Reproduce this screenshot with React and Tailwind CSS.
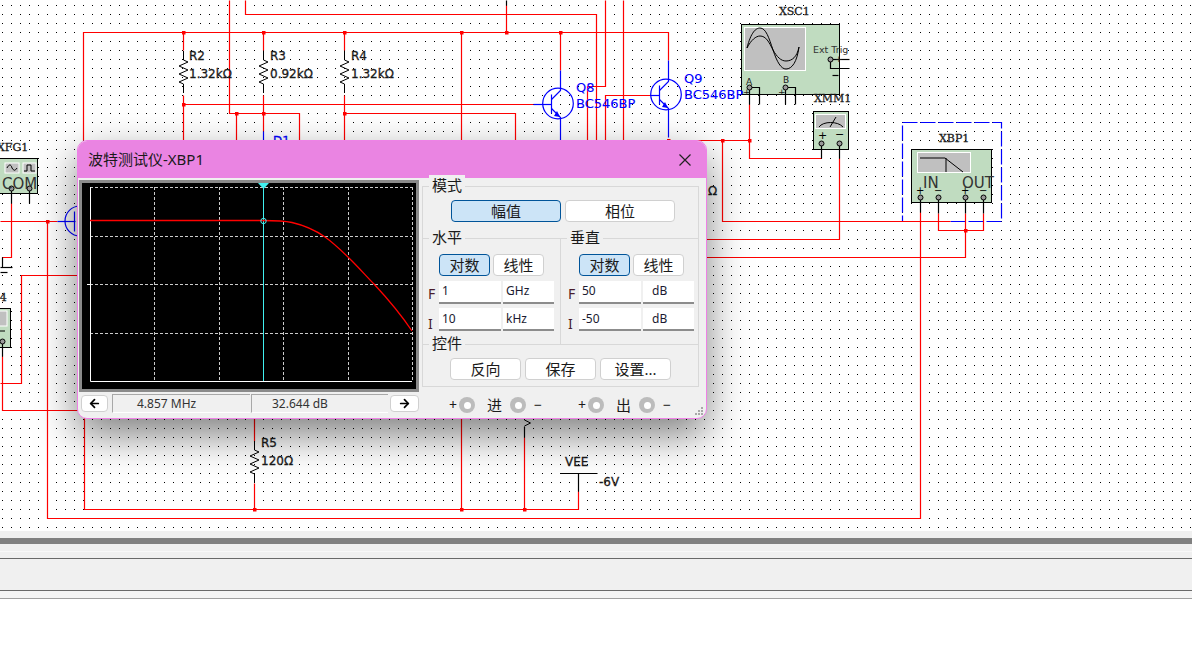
import React from "react";
import { ArrowLeft, ArrowRight } from "lucide-react";

const RED = [
  "83,140 83,32 668,32 668,60",
  "229,0 229,113 299,113 299,140",
  "245,0 245,14 596,14 596,140",
  "506,5 506,32",
  "183,32 183,50", "183,95 183,140",
  "263,32 263,50", "263,95 263,131",
  "344,32 344,50", "344,95 344,140",
  "183,104 533,104",
  "344,113 515,113 515,140",
  "236,113 236,140",
  "461,32 461,140",
  "560,32 560,70",
  "605,0 605,86 587,86 587,140",
  "650,95 605,95 605,140",
  "623,0 623,140",
  "668,140 749,140",
  "749,104 749,158 821,158",
  "839,158 839,239 700,239",
  "722,140 722,221 950,221",
  "700,257 965,257 965,213",
  "920,212 920,518 47,518 47,221",
  "0,221 57,221",
  "938,213 938,230 983,230 983,213",
  "84,410 84,509 578,509 578,491",
  "254,410 254,441", "254,483 254,509",
  "461,410 461,509",
  "524,437 524,509",
  "2,356 2,410 90,410",
  "90,275 21,275 21,383 0,383",
  "11,203 11,257 2,257",
];
const BLACK = [
  "506,0 506,5",
  "578,473 578,491", "560,473 597,473",
  "749,87 759,87 759,104", "749,87 749,104",
  "785,87 795,87 795,104", "785,87 785,104",
  "830,59 849,59", "830,59 830,68 849,68", "832,75 838,75",
  "821,143 821,158", "839,143 839,158",
  "920,197 920,212", "938,197 938,213", "965,197 965,213", "983,197 983,213",
  "11,188 11,203", "29,188 29,203",
  "2,257 2,266", "0,267 12,267", "0,272 7,272",
  "2,341 2,356",
  "524,426 524,437",
];
const BLUE = [
  "263,131 263,150", "57,221 75,221", "74,211 74,231",
  "533,104 551,104", "551,94 551,113", "551,99 560,90 560,70", "551,108 560,117 560,145",
  "650,95 659,95", "659,85 659,104", "659,90 668,81 668,60", "659,99 668,108 668,137",
];
const DOTS = [
  [47, 221], [183, 32], [263, 32], [344, 32], [461, 32], [506, 32], [560, 32], [183, 104], [236, 113], [263, 113], [344, 113],
  [749, 140], [722, 140], [668, 140], [965, 230], [254, 509], [461, 509], [524, 509],
];
const PINS = [[749, 87], [785, 87], [830, 59], [821, 143], [839, 143], [920, 197], [938, 197], [965, 197], [983, 197], [11, 188], [29, 188], [2, 341]];

const shifted = (pts) =>
  pts.split(" ").map((p) => p.split(",").map((n) => Number(n) + 0.5).join(",")).join(" ");

function Lines({ items, color }) {
  return items.map((p) => <polyline key={p} points={shifted(p)} fill="none" stroke={color} strokeWidth="1.2" />);
}

function Resistor({ x, y }) {
  const c = x + 0.5;
  return (
    <g fill="none" stroke="#000" strokeWidth="1">
      <path d={`M${c} ${y - 9}V${y}l4.5 2l-9 4l9 4l-9 4l9 4l-9 4l4.5 2V${y + 33}`} />
    </g>
  );
}

const sans = { fontFamily: "'DejaVu Sans', sans-serif" };
const serif = { fontFamily: "'DejaVu Serif', serif" };

function T({ x, y, size = 12, fill = "#1a1a1a", style = sans, heavy = 0.3, children }) {
  return (
    <text x={x} y={y} fontSize={size} fill={fill} stroke={fill} strokeWidth={heavy} style={style}>
      {children}
    </text>
  );
}

function Schematic() {
  return (
    <svg className="block" width="1192" height="531" viewBox="0 0 1192 531">
      <defs>
        <pattern id="dots" patternUnits="userSpaceOnUse" width="9" height="9">
          <rect x="2" y="5" width="1" height="1" fill="#000" />
        </pattern>
      </defs>
      <rect width="1192" height="531" fill="#fff" />
      <rect width="1192" height="531" fill="url(#dots)" />

      {/* instrument bodies */}
      <rect x="741.5" y="24.5" width="98" height="70" fill="#c0dcc0" stroke="#000" />
      <rect x="744.5" y="27.5" width="61" height="43" fill="#c0c0c0" stroke="#fff" />
      <path d="M747 48C751 32 756 28 760 28C766 28 769 38 773 50C777 62 781 69 786 69C792 69 797 62 799 47" fill="none" stroke="#000" />
      <path d="M747 48C751 40 756 36 760 36C766 36 769 42 773 50C777 57 781 61 786 61C792 61 797 57 799 47" fill="none" stroke="#000" />

      <rect x="813.5" y="111.5" width="35" height="38" fill="#c0dcc0" stroke="#000" />
      <rect x="815.5" y="114.5" width="30" height="14" fill="#c0c0c0" stroke="#fff" />
      <path d="M819 127C823 121 838 121 843 127M830 127L836 117" fill="none" stroke="#000" />

      <rect x="902.5" y="122.5" width="99" height="99" fill="none" stroke="#0000ff" strokeWidth="1.2" strokeDasharray="15 3" />
      <rect x="911.5" y="149.5" width="80" height="53" fill="#c0dcc0" stroke="#000" />
      <rect x="917.5" y="152.5" width="53" height="20" fill="#c0c0c0" stroke="#fff" />
      <path d="M920 158H945L963 172M946 158V172" fill="none" stroke="#000" />

      <rect x="-1.5" y="158.5" width="39" height="35" fill="#c0dcc0" stroke="#000" />
      <rect x="5" y="163" width="14" height="10" fill="#c0c0c0" stroke="#fff" />
      <rect x="23" y="163" width="13" height="10" fill="#c0c0c0" stroke="#fff" />
      <path d="M7 168C9 164 11 164 12 168C14 171 15 171 17 168M24 171H27V165H31V171H35" fill="none" stroke="#000" />
      <rect x="-1.5" y="308.5" width="12" height="39" fill="#c0dcc0" stroke="#000" />
      <rect x="-1" y="311" width="8" height="15" fill="#c0c0c0" stroke="#fff" />
      <path d="M0 331H5" stroke="#000" />

      <Lines items={RED} color="#ff0000" />
      <Lines items={BLACK} color="#000000" />
      <Lines items={BLUE} color="#0000ff" />

      <Resistor x={183} y={60} />
      <Resistor x={263} y={60} />
      <Resistor x={344} y={60} />
      <Resistor x={254} y={450} />
      <path d="M524.5 426l6 -3l-6 -3" fill="none" stroke="#000" />

      <circle cx="558" cy="103.5" r="15.3" fill="none" stroke="#0000ff" strokeWidth="1.2" />
      <circle cx="666" cy="94.5" r="15.3" fill="none" stroke="#0000ff" strokeWidth="1.2" />
      <circle cx="80" cy="221" r="15" fill="none" stroke="#0000ff" strokeWidth="1.2" />
      <path d="M560 117l-6 -1l3 -5z" fill="#0000ff" />
      <path d="M668 108l-6 -1l3 -5z" fill="#0000ff" />

      {DOTS.map(([x, y]) => (
        <rect key={`${x}-${y}`} x={x - 1} y={y - 1} width="3.5" height="3.5" fill="#ff0000" />
      ))}
      {PINS.map(([x, y]) => (
        <circle key={`${x}-${y}`} cx={x + 0.5} cy={y + 0.5} r="2.5" fill="#999" stroke="#000" />
      ))}

      <T x={189} y={60}>R2</T>
      <T x={189} y={78}>1.32kΩ</T>
      <T x={270} y={60}>R3</T>
      <T x={270} y={78}>0.92kΩ</T>
      <T x={351} y={60}>R4</T>
      <T x={351} y={78}>1.32kΩ</T>
      <T x={261} y={447}>R5</T>
      <T x={261} y={465}>120Ω</T>
      <T x={565} y={466}>VEE</T>
      <T x={599} y={486}>-6V</T>
      <T x={708} y={195}>Ω</T>
      <T x={576} y={92} size={13} fill="#0000ff" heavy={0.1}>Q8</T>
      <T x={576} y={108} size={13} fill="#0000ff" heavy={0.1}>BC546BP</T>
      <T x={684} y={83} size={13} fill="#0000ff" heavy={0.1}>Q9</T>
      <T x={684} y={99} size={13} fill="#0000ff" heavy={0.1}>BC546BP</T>
      <T x={273} y={145} fill="#0000ff">D1</T>
      <T x={779} y={15} size={11} style={serif}>XSC1</T>
      <T x={814} y={102} size={11} style={serif}>XMM1</T>
      <T x={939} y={142} size={11} style={serif}>XBP1</T>
      <T x={-3} y={151} size={11} style={serif}>XFG1</T>
      <T x={-8} y={301} size={11} style={serif}>Z4</T>
      <T x={813} y={53} size={9.5} fill="#333" heavy={0}>Ext Trig</T>
      <T x={746} y={85} size={9} heavy={0}>A</T>
      <T x={783} y={83} size={9} heavy={0}>B</T>
      <T x={743} y={95} size={9} heavy={0}>+</T>
      <T x={778} y={95} size={9} heavy={0}>+</T>
      <T x={835} y={62} size={9} heavy={0}>+</T>
      <T x={818} y={139} size={11} fill="#000" heavy={0}>+</T>
      <T x={835} y={138} size={11} fill="#000" heavy={0}>−</T>
      <T x={923} y={188} size={15} fill="#333" heavy={0}>IN</T>
      <T x={962} y={188} size={15} fill="#333" heavy={0}>OUT</T>
      <T x={916} y={194} size={10} fill="#000" heavy={0}>+</T>
      <T x={934} y={194} size={10} fill="#000" heavy={0}>−</T>
      <T x={961} y={194} size={10} fill="#000" heavy={0}>+</T>
      <T x={979} y={194} size={10} fill="#000" heavy={0}>−</T>
      <T x={2} y={189} size={15} fill="#333" heavy={0}>COM</T>
    </svg>
  );
}

function Plot() {
  const dash = { stroke: "#cccccc", strokeDasharray: "3 2", strokeWidth: 1, fill: "none" };
  return (
    <svg className="block" width="334" height="206" viewBox="82 183 334 206">
      {[154.5, 219.5, 283.5, 348.5, 412.5].map((x) => (
        <path key={x} d={`M${x} 187V381`} {...dash} />
      ))}
      {[187.5, 236.5, 284.5, 333.5].map((y) => (
        <path key={y} d={`M90 ${y}H412`} {...dash} />
      ))}
      <path d="M90.5 187V381.5H412M87 284.5H90" fill="none" stroke="#fff" />
      <path d="M263.5 186V381" stroke="#40f0f0" fill="none" />
      <path d="M258 183H269L263.5 189z" fill="#40f0f0" />
      <path d="M90 220.5H263C275 220.5 285 221 292 222.5C303 225 315 230 325 237C335 244 345 254 352 261C360 269 368 278 374 284C387 298 402 316 412 331" fill="none" stroke="#ff0000" strokeWidth="1.3" />
      <circle cx="263.5" cy="221" r="2.7" fill="none" stroke="#40f0f0" />
    </svg>
  );
}

function Btn({ w, on, children }) {
  return (
    <button
      className={`h-[22px] shrink-0 rounded-[4px] border text-[15px] leading-none text-[#1a1a1a] ${w} ${on ? "border-[#005499] bg-[#cce4f7]" : "border-[#d0d0d0] bg-white"}`}
    >
      {children}
    </button>
  );
}

function Legend({ children }) {
  return (
    <div className="-mt-[12px] ml-[6px] h-[20px] w-fit bg-[#f0f0f0] px-[3px] text-[15px] leading-[20px] text-[#1a1a1a]">
      {children}
    </div>
  );
}

function Field({ w, children, center }) {
  return (
    <div className={`flex h-[23px] shrink-0 items-center border-b-2 border-b-[#8c8c8c] bg-white text-[12px] text-[#1a1a30] ${w} ${center ? "pl-[9px]" : "pl-[3px]"}`}>
      {children}
    </div>
  );
}

function AxisBlock({ first, second, a, b, inset = "" }) {
  return (
    <div className={inset}>
      <div className="ml-[16px] mt-[7px] flex gap-[3px]">
        <Btn w="w-[51px]" on>对数</Btn>
        <Btn w="w-[51px]">线性</Btn>
      </div>
      <div className="mt-[4px] flex flex-col gap-px">
        {[["F", first, a], ["I", second, b]].map(([label, val, unit]) => (
          <div key={label} className="flex items-center">
            <span className={`w-[16px] pl-[5px] text-[14px] text-[#4a1c2c] ${label === "I" ? "mt-[8px]" : "mt-[3px]"}`}>{label}</span>
            <Field w="w-[62px]">{val}</Field>
            <span className="w-[2px]" />
            <Field w="w-[51px]" center={unit === "dB"}>{unit}</Field>
          </div>
        ))}
      </div>
    </div>
  );
}

function Knob() {
  return (
    <span className="flex h-4 w-4 shrink-0 items-center justify-center rounded-full bg-[#bcbcbc]">
      <span className="h-[7px] w-[7px] rounded-full bg-white" />
    </span>
  );
}

function Terminal({ label }) {
  return (
    <div className="flex w-[93px] items-center text-[#1a1a1a]">
      <span className="w-[10px] text-[14px] leading-none">+</span>
      <Knob />
      <span className="ml-[12px] w-[14px] text-[15px] leading-none">{label}</span>
      <span className="w-[9px]" />
      <Knob />
      <span className="ml-[8px] text-[14px] leading-none">−</span>
    </div>
  );
}

function Dialog() {
  return (
    <div className="absolute left-[77px] top-[140px] flex h-[279px] w-[630px] flex-col overflow-hidden rounded-[10px] border border-[#ee82e6] bg-[#f0f0f0] shadow-[0_16px_40px_rgba(0,0,0,0.5)]">
      <div className="flex h-[37px] shrink-0 items-center justify-between bg-[#ea84e2] pl-[10px] pr-[15px] text-[15px] text-[#1a1a1a]">
        <span>波特测试仪-XBP1</span>
        <svg width="12" height="12" viewBox="0 0 12 12"><path d="M0.5 0.5L11.5 11.5M11.5 0.5L0.5 11.5" stroke="#222" strokeWidth="1.2" /></svg>
      </div>
      <div className="flex flex-1">
        <div className="flex w-[342px] shrink-0 flex-col pl-px pt-[2px]">
          <div className="h-[212px] w-[340px] border-[3px] border-[#8a8a8a] bg-black">
            <Plot />
          </div>
          <div className="mt-[2px] flex h-[19px] items-center text-[12px] text-[#333]">
            <button className="ml-[2px] flex h-[17px] w-[27px] items-center justify-center rounded-[4px] border border-[#d0d0d0] bg-white">
              <ArrowLeft size={13} strokeWidth={3.2} color="#000" />
            </button>
            <div className="ml-[4px] flex h-[19px] w-[138px] items-center border-y border-l border-[#a8a8a8] border-b-white pl-[24px]">4.857 MHz</div>
            <div className="ml-px flex h-[19px] w-[137px] items-center border-y border-l border-[#a8a8a8] border-b-white pl-[20px]">32.644 dB</div>
            <button className="ml-[2px] flex h-[17px] w-[29px] items-center justify-center rounded-[4px] border border-[#d0d0d0] bg-white">
              <ArrowRight size={13} strokeWidth={3.2} color="#000" />
            </button>
          </div>
        </div>
        <div className="ml-[2px] flex flex-col pt-[8px]">
          <div className="flex h-[201px] w-[277px] flex-col border border-[#d8d8d8]">
            <div className="h-[51px] shrink-0">
              <Legend>模式</Legend>
              <div className="ml-[28px] mt-[5px] flex gap-[4px]">
                <Btn w="w-[110px]" on>幅值</Btn>
                <Btn w="w-[110px]">相位</Btn>
              </div>
            </div>
            <div className="flex h-[106px] shrink-0 border-t border-[#d8d8d8]">
              <div className="w-[138px] shrink-0 border-r border-[#d8d8d8]">
                <Legend>水平</Legend>
                <AxisBlock first="1" second="10" a="GHz" b="kHz" />
              </div>
              <div className="flex-1">
                <Legend>垂直</Legend>
                <AxisBlock first="50" second="-50" a="dB" b="dB" inset="ml-[2px]" />
              </div>
            </div>
            <div className="flex-1 border-t border-[#d8d8d8]">
              <Legend>控件</Legend>
              <div className="ml-[27px] mt-[5px] flex gap-[4px]">
                <Btn w="w-[71px]">反向</Btn>
                <Btn w="w-[71px]">保存</Btn>
                <Btn w="w-[71px]">设置...</Btn>
              </div>
            </div>
          </div>
          <div className="ml-[27px] mt-[9px] flex h-[18px] items-center gap-[36px]">
            <Terminal label="进" />
            <Terminal label="出" />
          </div>
        </div>
      </div>
      <svg className="absolute bottom-0 right-0" width="12" height="12" viewBox="0 0 12 12" fill="#a8a8a8">
        <rect x="7" y="1" width="2" height="2" />
        <rect x="4" y="4" width="2" height="2" />
        <rect x="7" y="4" width="2" height="2" />
        <rect x="1" y="7" width="2" height="2" />
        <rect x="4" y="7" width="2" height="2" />
        <rect x="7" y="7" width="2" height="2" />
      </svg>
    </div>
  );
}

export default function App() {
  return (
    <div
      className="flex h-[646px] w-[1192px] flex-col overflow-hidden bg-white"
      style={{ fontFamily: "'Noto Sans','Noto Sans CJK SC',sans-serif" }}
    >
      <div className="relative h-[531px] shrink-0 overflow-hidden">
        <Schematic />
        <Dialog />
      </div>
      <div className="h-[7px] shrink-0 bg-[#f0f0f0]" />
      <div className="h-[6px] shrink-0 bg-[#808080]" />
      <div className="h-[14px] shrink-0 bg-[#f0f0f0]">
        <div className="mt-[7px] h-px bg-[#f8f8f8]" />
      </div>
      <div className="h-[33px] shrink-0 border-y border-[#696969] bg-[#f0f0f0]" />
      <div className="h-[8px] shrink-0 border-b border-[#a0a0a0] bg-[#f4f4f4]" />
      <div className="flex-1 bg-white" />
    </div>
  );
}
